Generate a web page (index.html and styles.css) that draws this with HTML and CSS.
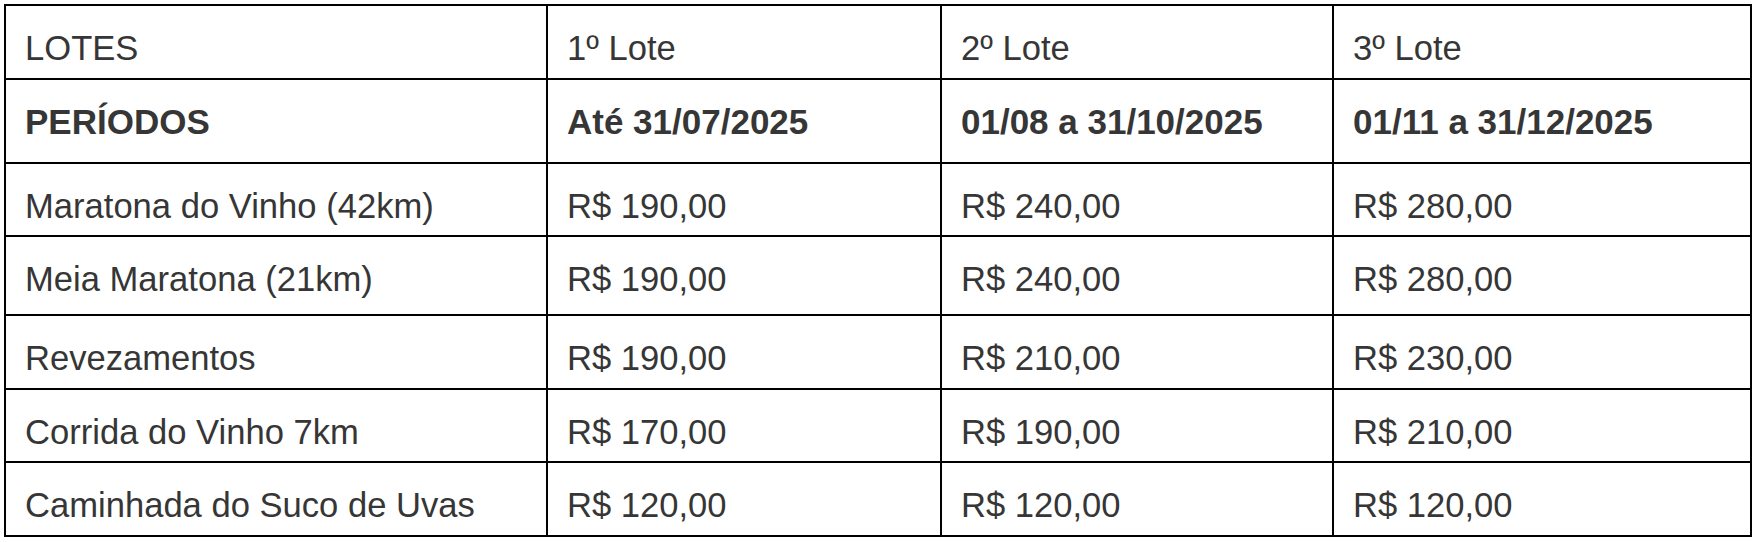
FILE: index.html
```html
<!DOCTYPE html>
<html lang="pt-BR">
<head>
<meta charset="utf-8">
<title>Lotes</title>
<link rel="stylesheet" href="styles.css">
</head>
<body>
<table class="lotes">
  <colgroup>
    <col class="c1"><col class="c2"><col class="c3"><col class="c4">
  </colgroup>
  <tbody>
    <tr class="r1"><td>LOTES</td><td>1º Lote</td><td>2º Lote</td><td>3º Lote</td></tr>
    <tr class="r2 bold"><td>PERÍODOS</td><td>Até 31/07/2025</td><td>01/08 a 31/10/2025</td><td>01/11 a 31/12/2025</td></tr>
    <tr class="r3"><td>Maratona do Vinho (42km)</td><td>R$ 190,00</td><td>R$ 240,00</td><td>R$ 280,00</td></tr>
    <tr class="r4"><td>Meia Maratona (21km)</td><td>R$ 190,00</td><td>R$ 240,00</td><td>R$ 280,00</td></tr>
    <tr class="r5"><td>Revezamentos</td><td>R$ 190,00</td><td>R$ 210,00</td><td>R$ 230,00</td></tr>
    <tr class="r6"><td>Corrida do Vinho 7km</td><td>R$ 170,00</td><td>R$ 190,00</td><td>R$ 210,00</td></tr>
    <tr class="r7"><td>Caminhada do Suco de Uvas</td><td>R$ 120,00</td><td>R$ 120,00</td><td>R$ 120,00</td></tr>
  </tbody>
</table>
</body>
</html>
```
FILE: styles.css
```css
html, body {
  margin: 0;
  padding: 0;
  background: #ffffff;
}
body {
  padding: 4px 0 0 4px;
  font-family: "Liberation Sans", Arial, sans-serif;
  color: #363636;
}
.lotes {
  border-collapse: separate;
  border-spacing: 0;
  border-top: 2px solid #000;
  border-left: 2px solid #000;
  table-layout: fixed;
  width: 1748px;
}
.c1 { width: 542px; }
.c2 { width: 394px; }
.c3 { width: 392px; }
.c4 { width: 418px; }
.lotes td {
  box-sizing: border-box;
  border-right: 2px solid #000;
  border-bottom: 2px solid #000;
  padding: 23px 10px 0 19px;
  vertical-align: top;
  font-size: 34.6px;
  line-height: 38px;
  white-space: nowrap;
}
.bold td { font-weight: bold; font-size: 35px; }
.r1 td { height: 74px; }
.r2 td { height: 84px; }
.r3 td { height: 73px; }
.r4 td { height: 79px; }
.r5 td { height: 74px; }
.r6 td { height: 73px; }
.r7 td { height: 74px; }
```
